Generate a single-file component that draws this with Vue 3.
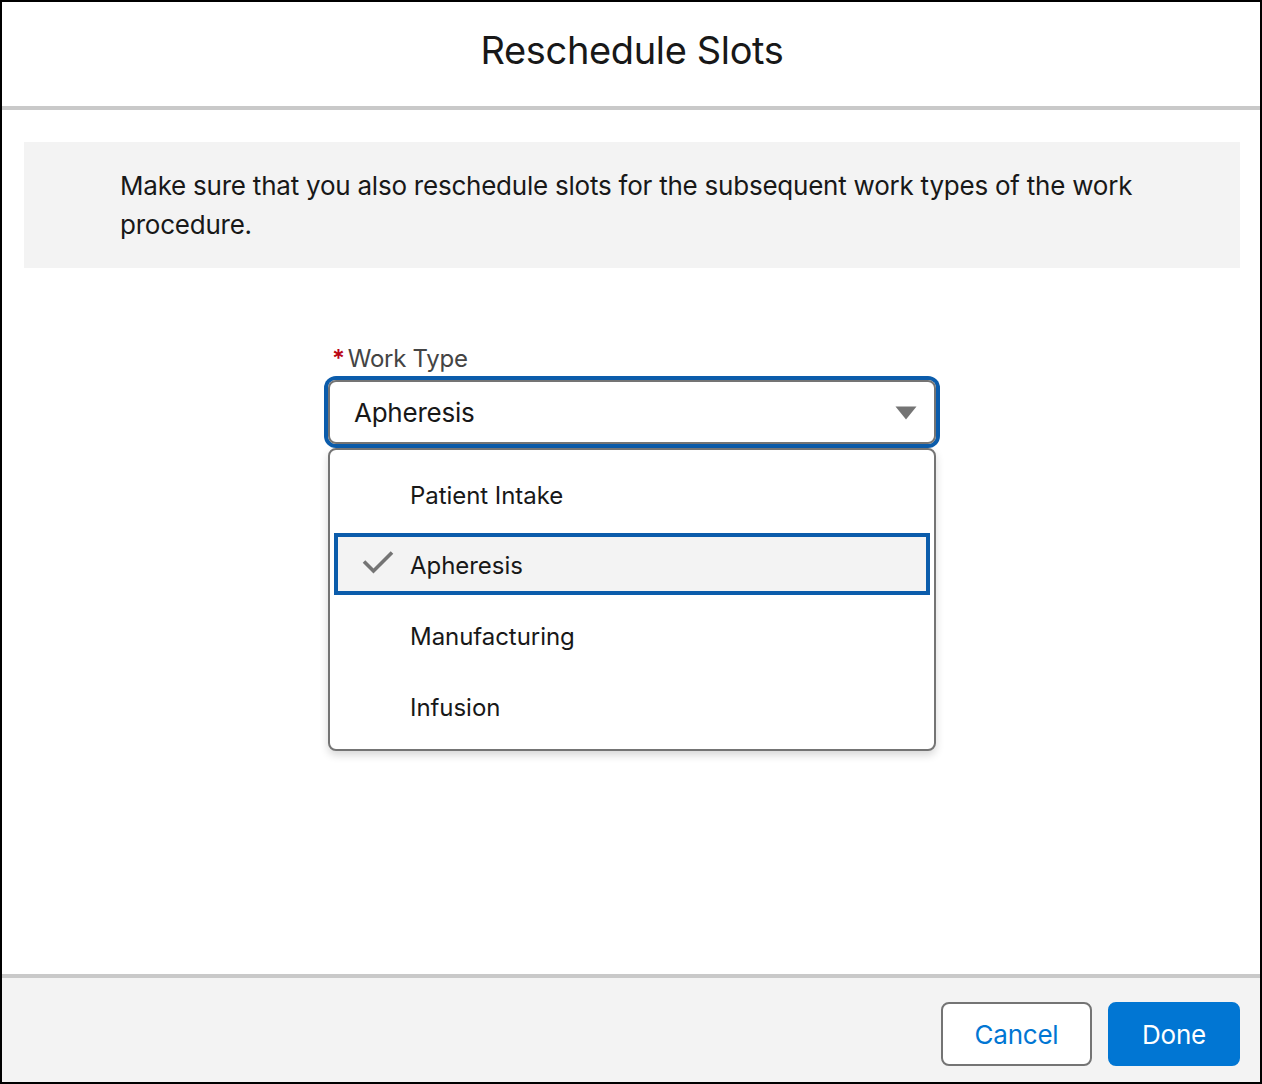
<template>
  <div class="modal">
    <header class="modal-header">
      <h1 class="title">Reschedule Slots</h1>
    </header>

    <main class="modal-body">
      <div class="notice">
        Make sure that you also reschedule slots for the subsequent work types of the work procedure.
      </div>

      <div class="field">
        <div class="label"><span class="required">*</span>Work Type</div>
        <div class="select">
          <span>{{ selected }}</span>
          <svg class="caret" width="22" height="14" viewBox="0 0 22 14">
            <path d="M0.5 0.5h21L11 13.5z" fill="#747474" />
          </svg>
        </div>
        <ul class="options">
          <li
            v-for="item in workTypes"
            :key="item"
            class="option"
            :class="{ active: item === selected }"
          >
            <svg v-if="item === selected" class="check" width="32" height="24" viewBox="0 0 32 24">
              <path d="M2 11.5l9.5 9.5L30 2.5" fill="none" stroke="#747474" stroke-width="3.6" />
            </svg>
            <span class="option-text">{{ item }}</span>
          </li>
        </ul>
      </div>
    </main>

    <footer class="modal-footer">
      <button class="btn cancel">Cancel</button>
      <button class="btn done">Done</button>
    </footer>
  </div>
</template>

<script setup>
import { ref } from 'vue'

const selected = ref('Apheresis')
const workTypes = ['Patient Intake', 'Apheresis', 'Manufacturing', 'Infusion']
</script>

<style>
html, body {
  margin: 0;
  background: #fff;
}
</style>

<style scoped>
.modal {
  box-sizing: border-box;
  width: 1262px;
  height: 1084px;
  border: 2px solid #000;
  display: flex;
  flex-direction: column;
  font-family: Inter, "Liberation Sans", sans-serif;
  color: #181818;
  background: #fff;
}

.modal-header {
  height: 108px;
  box-sizing: border-box;
  border-bottom: 4px solid #c9c9c9;
  display: flex;
  align-items: center;
  justify-content: center;
  padding: 0 0 8px 2px;
}

.title {
  margin: 0;
  font-size: 38px;
  font-weight: 400;
  letter-spacing: -0.36px;
}

.modal-body {
  flex: 1;
  padding: 32px 20px 0 22px;
}

.notice {
  background: #f3f3f3;
  height: 126px;
  box-sizing: border-box;
  padding: 24px 96px 0;
  font-size: 26px;
  line-height: 39px;
  letter-spacing: -0.23px;
}

.field {
  width: 608px;
  margin: 74px auto 0;
}

.label {
  font-size: 24px;
  line-height: 32px;
  color: #444;
  letter-spacing: -0.25px;
  height: 37px;
  padding-top: 1px;
  padding-left: 4px;
}

.required {
  color: #ba0517;
  font-weight: 600;
  margin-right: 3px;
}

.select {
  box-sizing: border-box;
  height: 64px;
  border: 2px solid #747474;
  border-radius: 8px;
  box-shadow: 0 0 0 4px #0b5cab;
  padding: 0 17px 0 24px;
  display: flex;
  align-items: center;
  justify-content: space-between;
  font-size: 26px;
  letter-spacing: -0.25px;
}

.caret {
  margin-top: 2px;
}

.options {
  list-style: none;
  margin: 4px 0 0;
  padding: 10px 4px;
  box-sizing: border-box;
  height: 303px;
  border: 2px solid #747474;
  border-radius: 8px;
  box-shadow: 0 4px 8px rgba(0, 0, 0, 0.16);
  background: #fff;
}

.option {
  position: relative;
  box-sizing: border-box;
  height: 71px;
  display: flex;
  align-items: center;
  font-size: 24px;
  letter-spacing: -0.05px;
  padding-left: 76px;
}

.option.active {
  height: 62px;
  margin: 2px 0 6px;
  padding-top: 3px;
  background: #f3f3f3;
  border: 4px solid #0b5cab;
  padding-left: 72px;
}

.check {
  position: absolute;
  left: 24px;
  top: 13px;
}

.modal-footer {
  height: 108px;
  box-sizing: border-box;
  border-top: 4px solid #c9c9c9;
  background: #f3f3f3;
  padding: 24px 20px 0 0;
  display: flex;
  justify-content: flex-end;
  gap: 16px;
}

.btn {
  height: 64px;
  border-radius: 8px;
  font-family: inherit;
  font-size: 26px;
  letter-spacing: -0.25px;
}

.cancel {
  width: 151px;
  background: #fff;
  color: #0176d3;
  border: 2px solid #747474;
}

.done {
  width: 132px;
  background: #0176d3;
  color: #fff;
  border: 2px solid #0176d3;
}
</style>
